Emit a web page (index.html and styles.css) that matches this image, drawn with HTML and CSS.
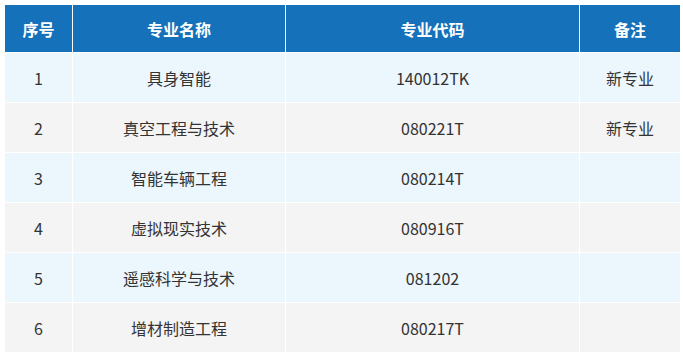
FILE: index.html
```html
<!DOCTYPE html>
<html lang="zh">
<head>
<meta charset="utf-8">
<link rel="stylesheet" href="styles.css">
</head>
<body>
<table class="majors">
  <colgroup>
    <col class="c-no">
    <col class="c-name">
    <col class="c-code">
    <col class="c-note">
  </colgroup>
  <thead>
    <tr><th>序号</th><th>专业名称</th><th>专业代码</th><th>备注</th></tr>
  </thead>
  <tbody>
    <tr class="odd"><td>1</td><td>具身智能</td><td>140012TK</td><td>新专业</td></tr>
    <tr class="even"><td>2</td><td>真空工程与技术</td><td>080221T</td><td>新专业</td></tr>
    <tr class="odd"><td>3</td><td>智能车辆工程</td><td>080214T</td><td></td></tr>
    <tr class="even"><td>4</td><td>虚拟现实技术</td><td>080916T</td><td></td></tr>
    <tr class="odd"><td>5</td><td>遥感科学与技术</td><td>081202</td><td></td></tr>
    <tr class="even"><td>6</td><td>增材制造工程</td><td>080217T</td><td></td></tr>
  </tbody>
</table>
</body>
</html>
```
FILE: styles.css
```css
html, body {
  margin: 0;
  padding: 0;
  background: #ffffff;
}
body {
  padding: 4px 0 0 4px;
  font-family: "Noto Sans CJK SC", "Noto Sans", sans-serif;
  font-size: 16px;
}
.majors {
  border-collapse: collapse;
  table-layout: fixed;
  width: 677px;
}
.c-no { width: 68px; }
.c-name { width: 213px; }
.c-code { width: 294px; }
.c-note { width: 101px; }
.majors th, .majors td {
  border: 1px solid #ffffff;
  text-align: center;
  vertical-align: middle;
  padding: 0;
  line-height: 20px;
}
.majors th {
  height: 47px;
  background: #1571b9;
  color: #ffffff;
  font-weight: bold;
}
.majors td {
  height: 49px;
  color: #333333;
}
.odd td { background: #ebf6fd; }
.even td { background: #f4f4f4; }
```
